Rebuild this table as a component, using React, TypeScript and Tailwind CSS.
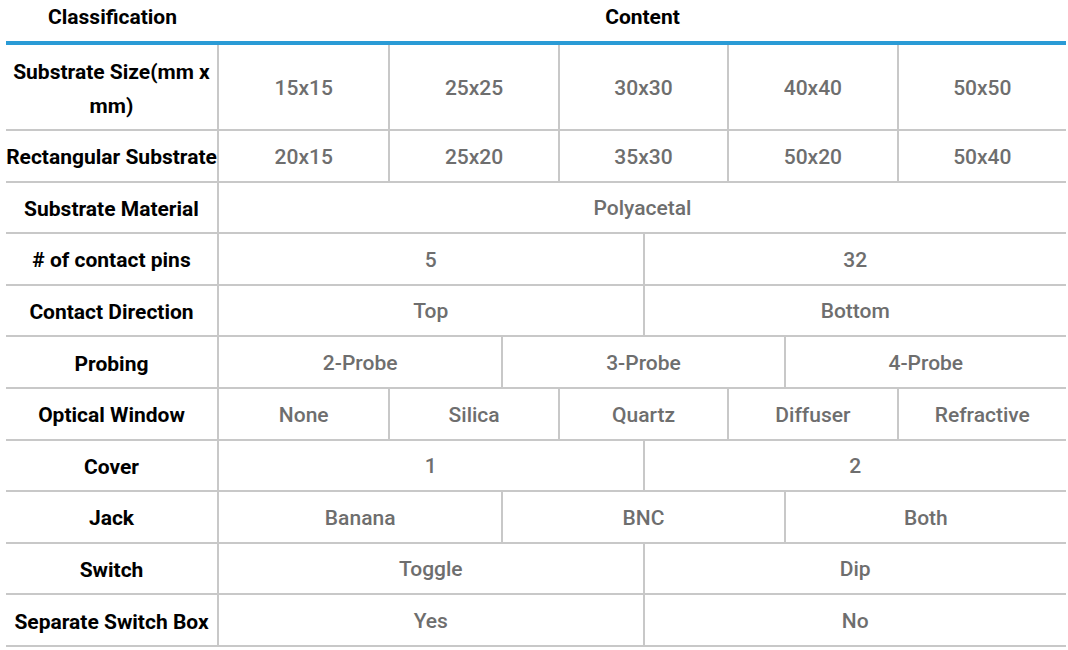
const rows: { label: string; values: string[]; tall?: boolean }[] = [
  { label: 'Substrate Size(mm x mm)', values: ['15x15', '25x25', '30x30', '40x40', '50x50'], tall: true },
  { label: 'Rectangular Substrate', values: ['20x15', '25x20', '35x30', '50x20', '50x40'] },
  { label: 'Substrate Material', values: ['Polyacetal'] },
  { label: '# of contact pins', values: ['5', '32'] },
  { label: 'Contact Direction', values: ['Top', 'Bottom'] },
  { label: 'Probing', values: ['2-Probe', '3-Probe', '4-Probe'] },
  { label: 'Optical Window', values: ['None', 'Silica', 'Quartz', 'Diffuser', 'Refractive'] },
  { label: 'Cover', values: ['1', '2'] },
  { label: 'Jack', values: ['Banana', 'BNC', 'Both'] },
  { label: 'Switch', values: ['Toggle', 'Dip'] },
  { label: 'Separate Switch Box', values: ['Yes', 'No'] },
];

const gridCols: Record<number, string> = {
  1: 'grid-cols-1',
  2: 'grid-cols-2',
  3: 'grid-cols-3',
  5: 'grid-cols-5',
};

export default function App() {
  return (
    <div className="bg-white w-[1068px] h-[650px] overflow-hidden" style={{ fontFamily: 'Roboto, "Liberation Sans", sans-serif' }}>
      <div className="ml-[6px] w-[1060px]">
        {/* header */}
        <div className="flex h-[45px] border-b-4 border-[#2a9bd6] text-[21px] font-bold text-black">
          <div className="w-[213px] flex items-center justify-center pb-[6px]">Classification</div>
          <div className="flex-1 flex items-center justify-center pb-[6px]">Content</div>
        </div>

        {rows.map((row) => (
          <div key={row.label} className={`flex border-b-2 border-[#c8c8c8] ${row.tall ? 'h-[86px]' : 'h-[51.6px]'}`}>
            <div className="w-[213px] shrink-0 border-r-2 border-[#c8c8c8] flex items-center justify-center text-center px-0 pt-[3px] text-[21px] font-bold text-black leading-[34px]">
              {row.label}
            </div>
            <div className={`flex-1 grid ${gridCols[row.values.length]}`}>
              {row.values.map((v, i) => (
                <div key={i} className={`flex items-center justify-center pt-[3px] text-[21px] font-medium text-[#6e6e6e] ${i > 0 ? 'border-l-2 border-[#c8c8c8]' : ''}`}>
                  {v}
                </div>
              ))}
            </div>
          </div>
        ))}
      </div>
    </div>
  );
}
